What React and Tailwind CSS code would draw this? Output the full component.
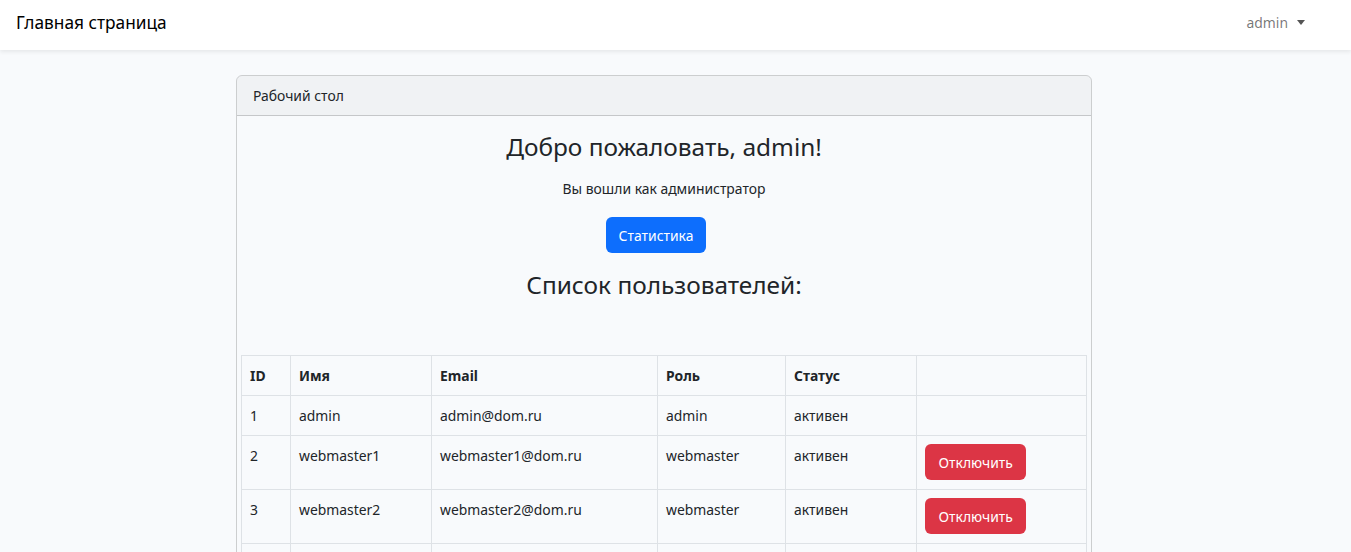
import { useState } from 'react';

const users = [
  { id: 1, name: 'admin', email: 'admin@dom.ru', role: 'admin', status: 'активен' },
  { id: 2, name: 'webmaster1', email: 'webmaster1@dom.ru', role: 'webmaster', status: 'активен' },
  { id: 3, name: 'webmaster2', email: 'webmaster2@dom.ru', role: 'webmaster', status: 'активен' },
  { id: 4, name: 'webmaster3', email: 'webmaster3@dom.ru', role: 'webmaster', status: 'активен' },
];

export default function App() {
  const [list] = useState(users);

  return (
    <div className="min-h-screen bg-[#f8fafc] text-[#212529] font-['Noto_Sans',sans-serif] text-[13.9px] leading-[23px]">
      <nav className="h-[50px] pb-[5px] bg-white shadow-[0_2px_4px_rgba(0,0,0,0.075)] flex items-center justify-between pl-4 pr-[46px]">
        <span className="text-[17.3px] text-black">Главная страница</span>
        <button className="flex items-center gap-[9px] text-[rgba(0,0,0,0.55)]">
          admin
          <span className="w-0 h-0 border-l-[4px] border-r-[4px] border-t-[5px] border-l-transparent border-r-transparent border-t-[#555]"></span>
        </button>
      </nav>

      <main className="pt-[25px]">
        <div className="ml-[236px] w-[856px] border border-black/[0.175] rounded-[6px] overflow-hidden">
          <div className="px-4 py-2 bg-black/[0.03] border-b border-black/[0.175]">Рабочий стол</div>
          <div className="pt-4 px-[4px] text-center">
            <h3 className="text-[24.4px] leading-[30px]">Добро пожаловать, admin!</h3>
            <p className="mt-[15px]">Вы вошли как администратор</p>
            <button className="mt-[17px] mr-4 h-[36px] px-[13px] rounded-[6px] bg-[#0d6efd] text-white">Статистика</button>
            <h3 className="mt-[17px] text-[24.4px] leading-[30px]">Список пользователей:</h3>

            <table className="mt-[55px] w-[845px] table-fixed border-collapse text-left">
              <colgroup>
                <col className="w-[49px]" />
                <col className="w-[141px]" />
                <col className="w-[226px]" />
                <col className="w-[128px]" />
                <col className="w-[131px]" />
                <col className="w-[170px]" />
              </colgroup>
              <thead>
                <tr className="font-bold">
                  <th className="border border-[#dee2e6] px-2 py-2 align-top">ID</th>
                  <th className="border border-[#dee2e6] px-2 py-2 align-top">Имя</th>
                  <th className="border border-[#dee2e6] px-2 py-2 align-top">Email</th>
                  <th className="border border-[#dee2e6] px-2 py-2 align-top">Роль</th>
                  <th className="border border-[#dee2e6] px-2 py-2 align-top">Статус</th>
                  <th className="border border-[#dee2e6] px-2 py-2"></th>
                </tr>
              </thead>
              <tbody>
                {list.map((u) => (
                  <tr key={u.id}>
                    <td className="border border-[#dee2e6] px-2 py-2 align-top">{u.id}</td>
                    <td className="border border-[#dee2e6] px-2 py-2 align-top">{u.name}</td>
                    <td className="border border-[#dee2e6] px-2 py-2 align-top">{u.email}</td>
                    <td className="border border-[#dee2e6] px-2 py-2 align-top">{u.role}</td>
                    <td className="border border-[#dee2e6] px-2 py-2 align-top">{u.status}</td>
                    <td className="border border-[#dee2e6] px-2 pt-2 pb-[9px] align-top">
                      {u.role !== 'admin' && (
                        <button className="block h-[36px] px-[13.5px] rounded-[6px] bg-[#dc3545] text-white">Отключить</button>
                      )}
                    </td>
                  </tr>
                ))}
              </tbody>
            </table>
          </div>
        </div>
      </main>
    </div>
  );
}
